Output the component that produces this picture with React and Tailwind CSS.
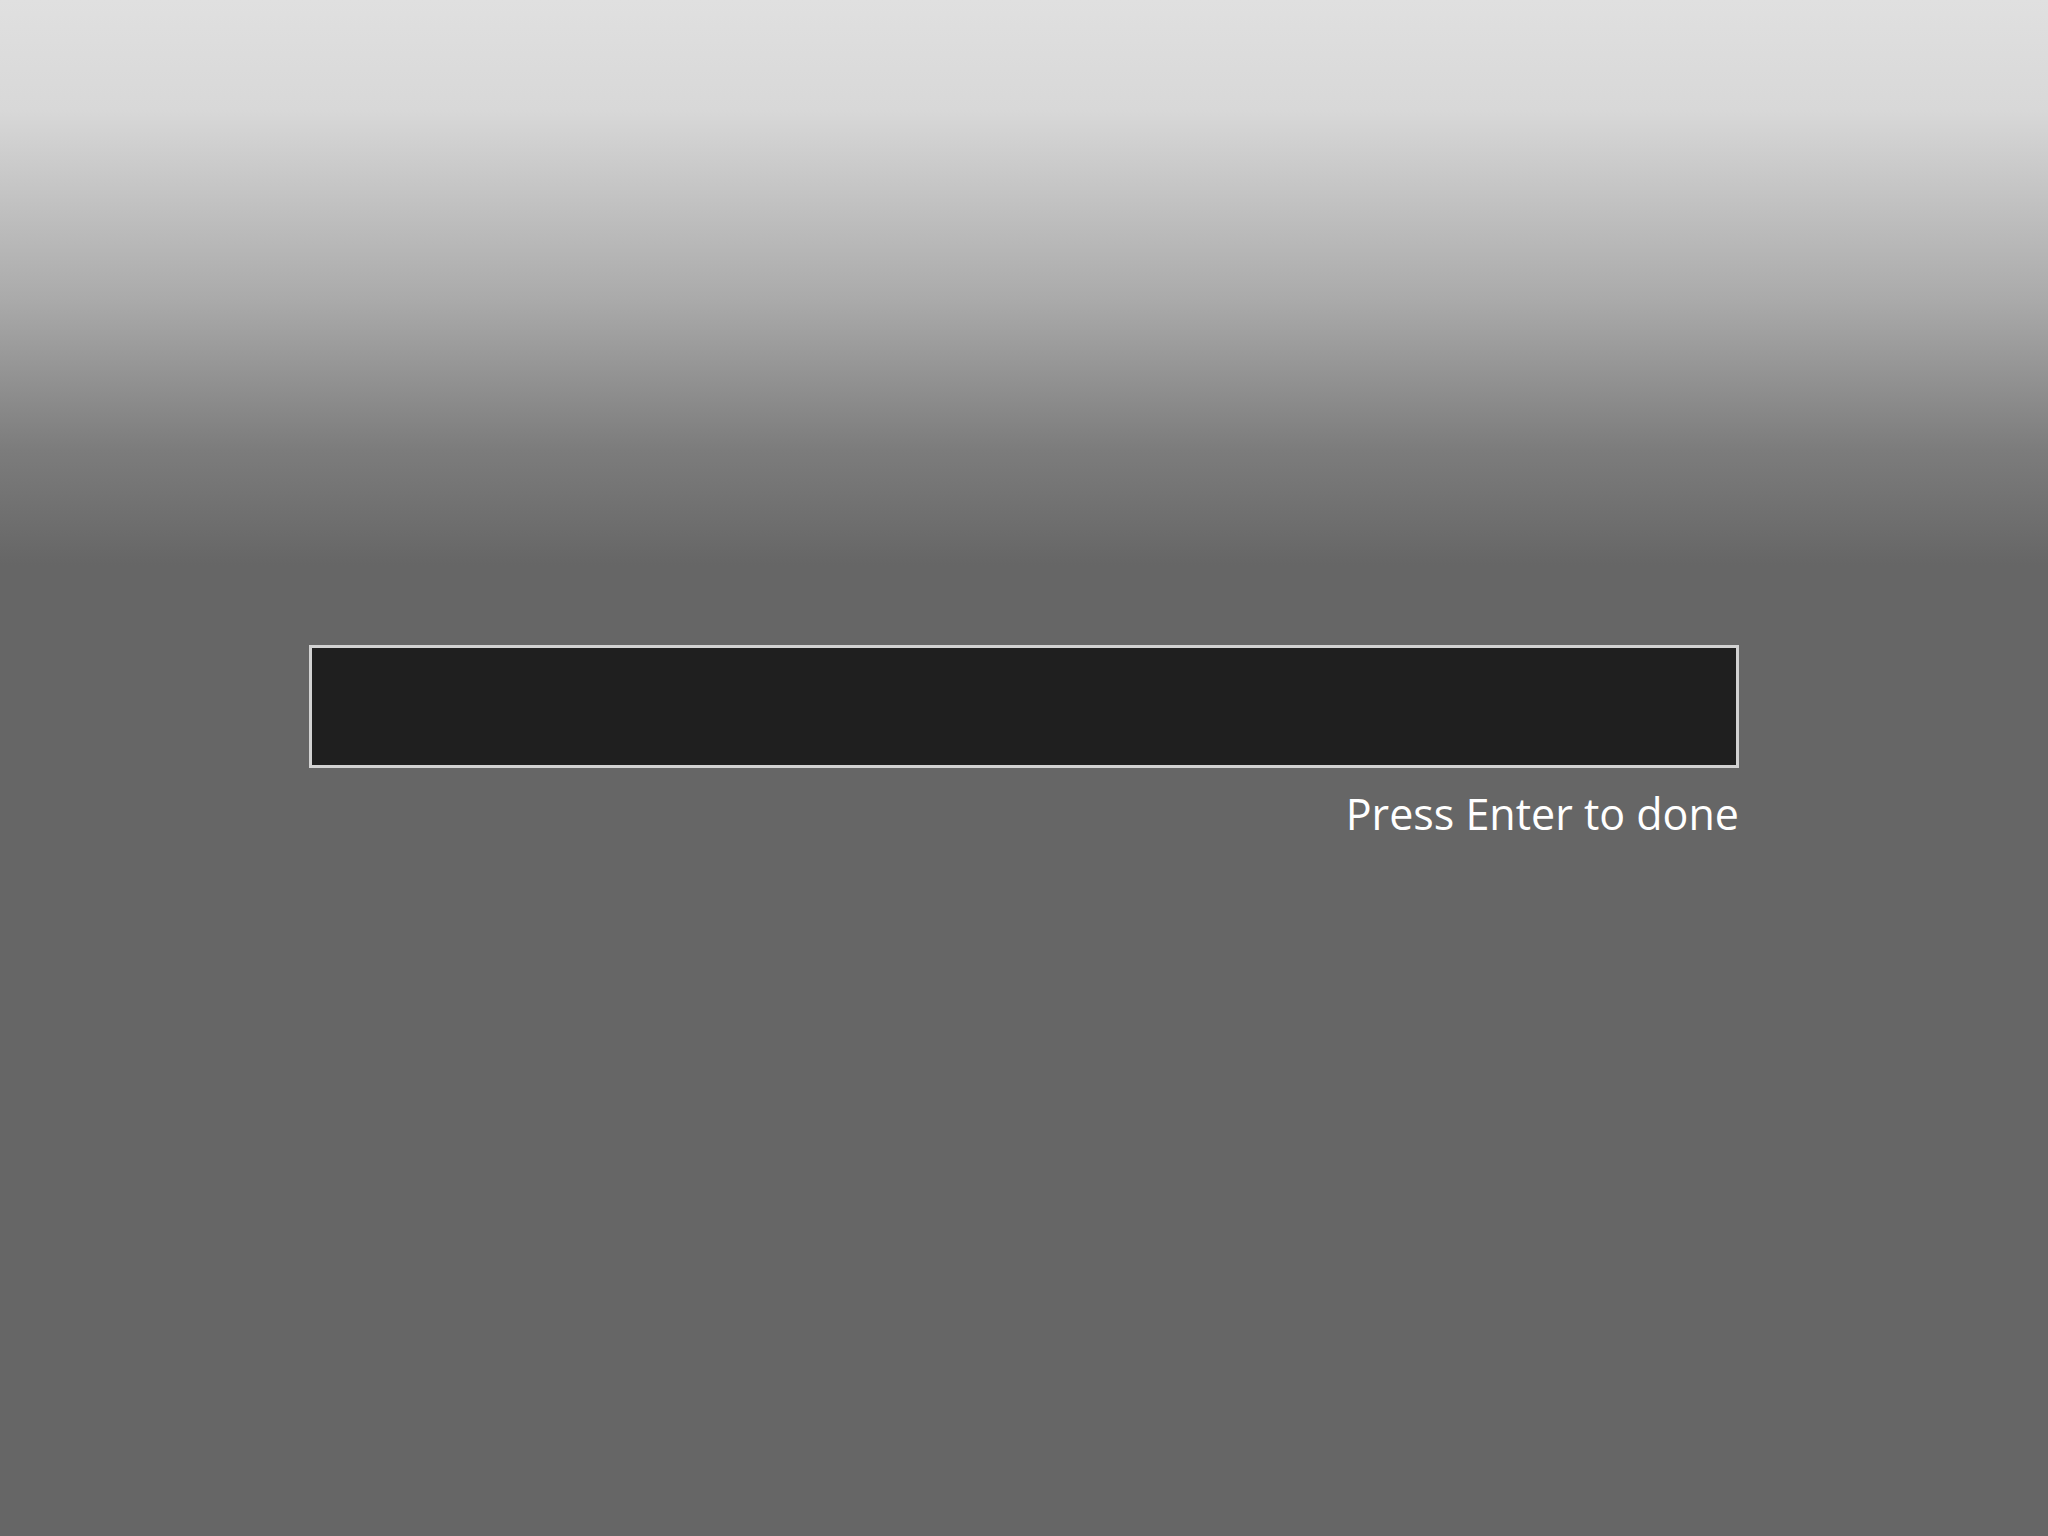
import React from 'react';

const App = () => {
  return (
    <div
      className="w-full h-[1536px] bg-[linear-gradient(to_bottom,#e0e0e0_0px,#d8d8d8_110px,#aaaaaa_300px,#7c7c7c_450px,#666666_565px,#666666_100%)]"
      style={{ fontFamily: '"Open Sans", "Liberation Sans", Arial, sans-serif' }}
    >
      <div className="mx-auto w-[1430px] pt-[645px] flex flex-col">
        <input
          type="text"
          className="h-[123px] w-full bg-[#1f1f1f] border-[3px] border-[#d2d2d2] outline-none text-white text-[42px] px-4"
        />
        <div className="mt-[24px] text-right text-white text-[43px] leading-none">
          Press Enter to done
        </div>
      </div>
    </div>
  );
};

export default App;
